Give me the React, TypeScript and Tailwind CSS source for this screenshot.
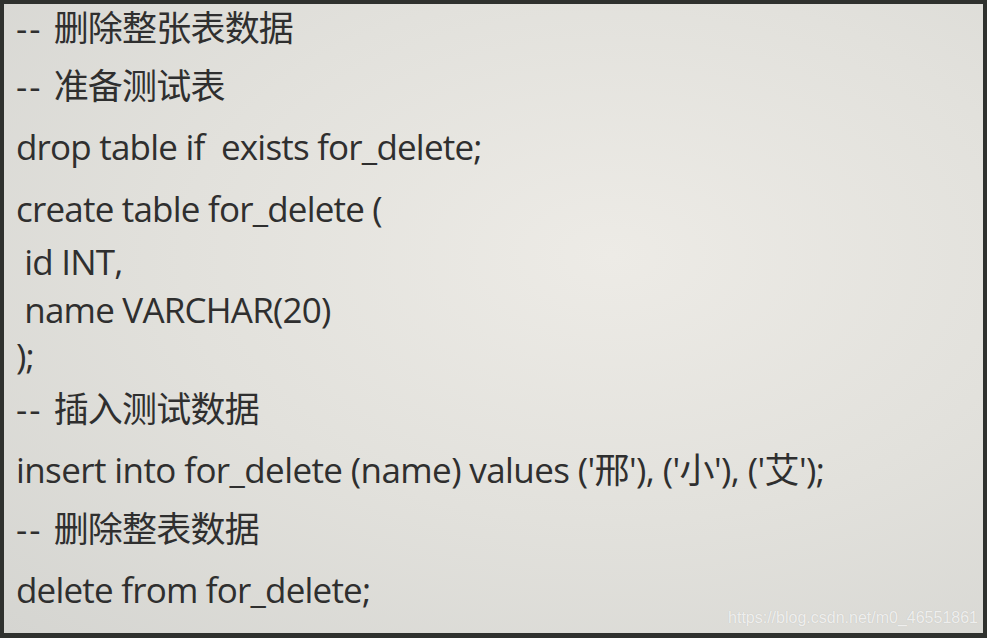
const lines = [
  { dash: true, text: "删除整张表数据", mt: "mt-0", track: "" },
  { dash: true, text: "准备测试表", mt: "mt-[18px]", track: "" },
  { dash: false, text: "drop table if  exists for_delete;", mt: "mt-[21px]", track: "" },
  { dash: false, text: "create table for_delete (", mt: "mt-[22px]", track: "" },
  { dash: false, text: " id INT,", mt: "mt-[13px]", track: "" },
  { dash: false, text: " name VARCHAR(20)", mt: "mt-[8px]", track: "" },
  { dash: false, text: ");", mt: "mt-[6px]", track: "" },
  { dash: true, text: "插入测试数据", mt: "mt-[13px]", track: "" },
  { dash: false, text: "insert into for_delete (name) values ('邢'), ('小'), ('艾');", mt: "mt-[21px]", track: "tracking-[-0.6px]" },
  { dash: true, text: "删除整表数据", mt: "mt-[19px]", track: "" },
  { dash: false, text: "delete from for_delete;", mt: "mt-[21px]", track: "" },
];

export default function App() {
  return (
    <div className="relative w-[987px] h-[638px] overflow-hidden border-t-4 border-x-4 border-b-[5px] border-[#2f312e] bg-[radial-gradient(ellipse_at_62%_40%,#edebe6_0%,#e2e1dc_50%,#d5d5d1_100%)]">
      <div className="flex flex-col pt-[4px] pl-[12px] font-['Open_Sans','Noto_Sans_CJK_SC',sans-serif] text-[35px] leading-[40px] tracking-[-0.8px] text-[#2f2f2f]">
        {lines.map((line, i) => (
          <div key={i} className={`whitespace-pre h-[40px] ${line.mt} ${line.track}`}>
            {line.dash && <span className="tracking-[2px]">-- </span>}
            {line.text}
          </div>
        ))}
      </div>
      <div className="absolute right-[5px] bottom-[7px] font-['Liberation_Sans',Arial,sans-serif] text-[16px] leading-none text-white/75 [text-shadow:0_0_1px_rgba(0,0,0,0.15)]">
        https://blog.csdn.net/m0_46551861
      </div>
    </div>
  );
}
